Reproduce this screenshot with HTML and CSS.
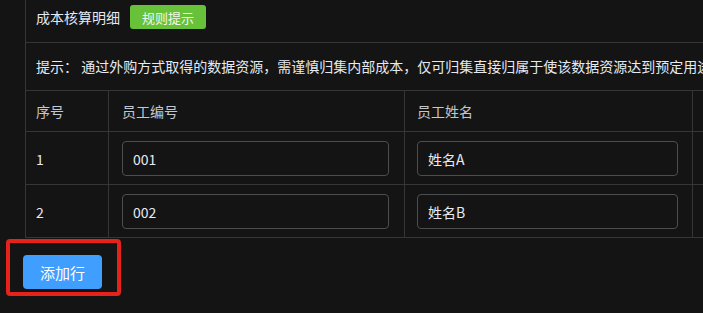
FILE: index.html
```html
<!DOCTYPE html>
<html>
<head>
  <title>成本核算明细</title>
<meta name="viewport" content="width=device-width, initial-scale=1">
<link rel="stylesheet" href="styles.css">
</head>
<body>
<div class="panel">
  <div class="panel-head">
    <span class="title">成本核算明细</span>
    <span class="tag">规则提示</span>
  </div>
  <div class="tip">提示： 通过外购方式取得的数据资源，需谨慎归集内部成本，仅可归集直接归属于使该数据资源达到预定用途所发生的支出。</div>
  <table class="grid">
    <thead>
      <tr>
        <th class="col-no">序号</th>
        <th class="col-code">员工编号</th>
        <th class="col-name">员工姓名</th>
        <th class="col-more"></th>
      </tr>
    </thead>
    <tbody>
      <tr>
        <td class="col-no">1</td>
        <td class="col-code"><input class="cell-input" value="001"></td>
        <td class="col-name"><input class="cell-input" value="姓名A"></td>
        <td class="col-more"></td>
      </tr>
      <tr>
        <td class="col-no">2</td>
        <td class="col-code"><input class="cell-input" value="002"></td>
        <td class="col-name"><input class="cell-input" value="姓名B"></td>
        <td class="col-more"></td>
      </tr>
    </tbody>
  </table>
</div>
<div class="actions">
  <button class="btn-add">添加行</button>
  <span class="mark"></span>
</div>
</body>
</html>
```

FILE: styles.css
```css
body {
  margin: 0;
  background-color: #141414;
  color: #e5eaf3;
  font-family: "Microsoft YaHei", "Noto Sans CJK SC", "Liberation Sans", sans-serif;
  font-size: 14px;
  overflow: hidden;
}

.panel {
  margin-left: 25px;
  width: 960px;
  border-left: 1px solid #363637;
}

.panel-head {
  display: flex;
  align-items: center;
  gap: 10px;
  height: 43px;
  box-sizing: border-box;
  padding: 5px 0 13px 10px;
  border-bottom: 1px solid #363637;
}

.title {
  color: #e5eaf3;
}

.tag {
  display: inline-flex;
  align-items: center;
  height: 24px;
  padding: 0 12px;
  border-radius: 3px;
  background-color: #67c23a;
  color: #f0f9eb;
  font-size: 13px;
}

.tip {
  height: 47px;
  line-height: 47px;
  padding-left: 10px;
  white-space: nowrap;
  overflow: hidden;
}

.grid {
  border-spacing: 0;
  border-top: 1px solid #363637;
  table-layout: fixed;
  width: 900px;
}

.grid th,
.grid td {
  border-right: 1px solid #363637;
  border-bottom: 1px solid #363637;
  text-align: left;
  padding: 9px 14px 8px 12px;
}

.grid th {
  font-weight: normal;
  color: #c4c7ce;
  height: 41px;
  box-sizing: border-box;
  padding-top: 0;
  padding-bottom: 0;
}

.grid td {
  color: #e5eaf3;
  vertical-align: middle;
}

.grid .col-no {
  width: 83px;
  padding-left: 10px;
}

.grid .col-code {
  width: 296px;
  padding-left: 13px;
  padding-right: 15px;
}

.grid .col-name {
  width: 288px;
}

.cell-input {
  display: block;
  width: 100%;
  height: 35px;
  box-sizing: border-box;
  padding: 0 10px;
  border: 1px solid #4c4d4f;
  border-radius: 4px;
  background-color: transparent;
  color: #e5eaf3;
  font-family: inherit;
  font-size: 14px;
}

.actions {
  position: relative;
  padding: 17px 0 0 23px;
  height: 60px;
}

.btn-add {
  width: 79px;
  height: 34px;
  border: none;
  border-radius: 4px;
  background-color: #409eff;
  color: #ffffff;
  font-family: inherit;
  font-size: 15px;
}

.mark {
  position: absolute;
  left: 6px;
  top: 1px;
  width: 115px;
  height: 57px;
  box-sizing: border-box;
  border: 4px solid #e5231b;
  border-radius: 4px;
}
```
